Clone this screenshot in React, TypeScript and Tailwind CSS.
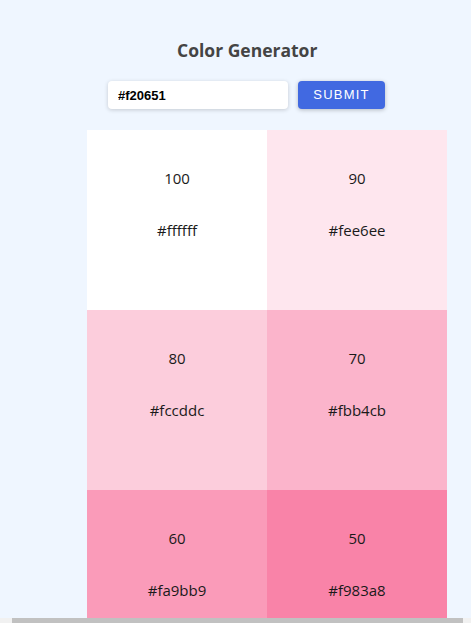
import React from "react";

const shades = [
  { w: "100", hex: "#ffffff", bg: "bg-[#ffffff]" },
  { w: "90", hex: "#fee6ee", bg: "bg-[#fee6ee]" },
  { w: "80", hex: "#fccddc", bg: "bg-[#fccddc]" },
  { w: "70", hex: "#fbb4cb", bg: "bg-[#fbb4cb]" },
  { w: "60", hex: "#fa9bb9", bg: "bg-[#fa9bb9]" },
  { w: "50", hex: "#f983a8", bg: "bg-[#f983a8]" },
];

export default function App() {
  return (
    <div className="relative h-[623px] w-[471px] overflow-hidden bg-[#eff6ff] font-['Open_Sans',sans-serif]">
      <div className="flex flex-col">
        <h1 className="mt-[37px] ml-[177px] text-[17.5px] font-bold leading-[27px] text-[#444444]">
          Color Generator
        </h1>
        <div className="mt-[17px] ml-[108px] flex gap-[10px]">
          <input
            readOnly
            value="#f20651"
            className="h-[28px] w-[180px] rounded-[4px] bg-white px-[10px] font-['Liberation_Sans',Arial,sans-serif] text-[13px] font-bold text-black shadow-[0_1px_4px_rgba(0,0,0,0.18)] outline-none"
          />
          <button className="h-[28px] w-[87px] rounded-[4px] bg-[#4169e1] font-['Liberation_Sans',Arial,sans-serif] text-[13px] tracking-[1.2px] text-white shadow-[0_1px_4px_rgba(0,0,0,0.25)]">
            SUBMIT
          </button>
        </div>
        <div className="mt-[21px] ml-[87px] grid w-[360px] grid-cols-2">
          {shades.map((s) => (
            <div
              key={s.w}
              className={`${s.bg} flex h-[180px] flex-col items-center pt-[37px] text-[15px] text-[#1a1a1a]`}
            >
              <div className="leading-[22px]">{s.w}</div>
              <div className="mt-[30px] leading-[22px]">{s.hex}</div>
            </div>
          ))}
        </div>
      </div>
      <div className="absolute bottom-0 left-0 h-[5px] w-full bg-[#f1f1f1]">
        <div className="ml-[12px] h-full w-[451px] bg-[#c1c1c1]" />
      </div>
    </div>
  );
}
